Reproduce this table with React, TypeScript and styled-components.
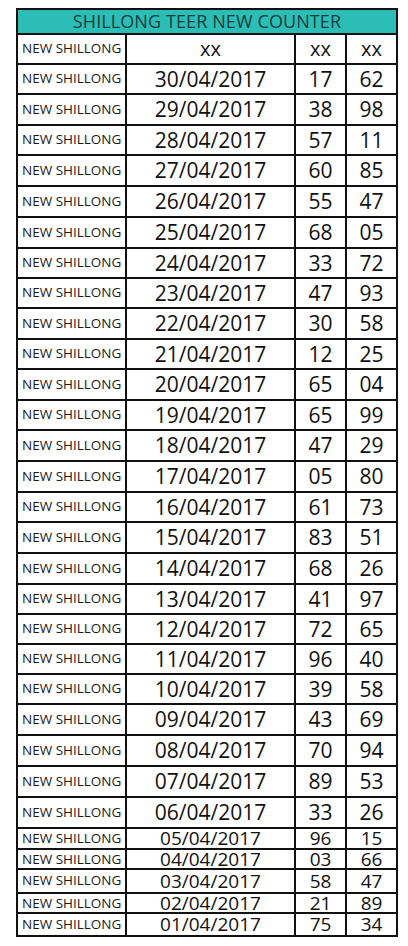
import React from "react";
import styled, { createGlobalStyle } from "styled-components";

const GlobalStyle = createGlobalStyle`
  html, body {
    margin: 0;
    padding: 0;
    background: #ffffff;
  }
  body {
    font-family: "Open Sans", "Liberation Sans", sans-serif;
    color: #111;
  }
`;

const Page = styled.div`
  padding: 8px 0 0 16px;
`;

const Table = styled.div`
  width: 382px;
  box-sizing: border-box;
  border: 2px solid #111;
  border-bottom: none;
`;

const Title = styled.div`
  height: 25px;
  box-sizing: border-box;
  border-bottom: 2px solid #111;
  background: #2cbdb6;
  color: #0c3f3b;
  font-size: 18px;
  line-height: 23px;
  text-align: center;
  letter-spacing: 0.1px;
`;

const Row = styled.div<{ $h: number }>`
  display: grid;
  grid-template-columns: 109px 169px 51px 1fr;
  height: ${(p) => p.$h}px;
  box-sizing: border-box;
  border-bottom: 2px solid #111;
`;

const Cell = styled.div<{ $size: number }>`
  display: flex;
  align-items: center;
  justify-content: center;
  border-right: 2px solid #111;
  font-size: ${(p) => p.$size}px;
  line-height: 1;
  &:last-child {
    border-right: none;
  }
`;

const NameCell = styled.div`
  display: flex;
  align-items: center;
  padding-left: 4px;
  border-right: 2px solid #111;
  font-size: 13.5px;
  line-height: 1;
  color: #1a1a1a;
  white-space: nowrap;
`;

const rows: [string, string, string, number][] = [
  ["30/04/2017", "17", "62", 30],
  ["29/04/2017", "38", "98", 31],
  ["28/04/2017", "57", "11", 30],
  ["27/04/2017", "60", "85", 31],
  ["26/04/2017", "55", "47", 31],
  ["25/04/2017", "68", "05", 31],
  ["24/04/2017", "33", "72", 30],
  ["23/04/2017", "47", "93", 30],
  ["22/04/2017", "30", "58", 31],
  ["21/04/2017", "12", "25", 30],
  ["20/04/2017", "65", "04", 31],
  ["19/04/2017", "65", "99", 30],
  ["18/04/2017", "47", "29", 31],
  ["17/04/2017", "05", "80", 31],
  ["16/04/2017", "61", "73", 30],
  ["15/04/2017", "83", "51", 31],
  ["14/04/2017", "68", "26", 31],
  ["13/04/2017", "41", "97", 30],
  ["12/04/2017", "72", "65", 30],
  ["11/04/2017", "96", "40", 30],
  ["10/04/2017", "39", "58", 30],
  ["09/04/2017", "43", "69", 31],
  ["08/04/2017", "70", "94", 31],
  ["07/04/2017", "89", "53", 31],
  ["06/04/2017", "33", "26", 31],
  ["05/04/2017", "96", "15", 21],
  ["04/04/2017", "03", "66", 20],
  ["03/04/2017", "58", "47", 24],
  ["02/04/2017", "21", "89", 20],
  ["01/04/2017", "75", "34", 23],
];

const App = () => {
  return (
    <>
      <GlobalStyle />
      <Page>
        <Table>
          <Title>SHILLONG TEER NEW COUNTER</Title>
          <Row $h={30}>
            <NameCell>NEW SHILLONG</NameCell>
            <Cell $size={20}>xx</Cell>
            <Cell $size={20}>xx</Cell>
            <Cell $size={20}>xx</Cell>
          </Row>
          {rows.map(([date, a, b, h]) => {
            const size = h < 25 ? 19 : 21;
            return (
              <Row key={date} $h={h}>
                <NameCell>NEW SHILLONG</NameCell>
                <Cell $size={size}>{date}</Cell>
                <Cell $size={size}>{a}</Cell>
                <Cell $size={size}>{b}</Cell>
              </Row>
            );
          })}
        </Table>
      </Page>
    </>
  );
};

export default App;
